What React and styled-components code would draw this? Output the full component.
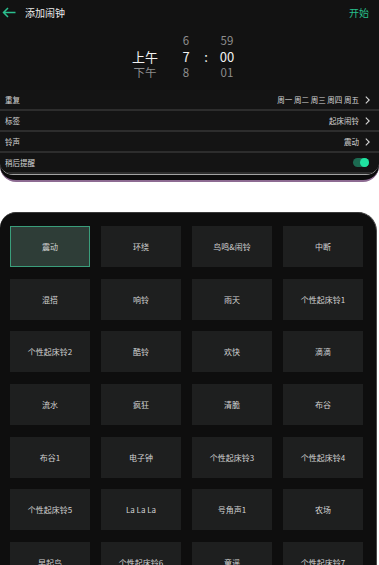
import React from "react";
import styled, { createGlobalStyle } from "styled-components";

const Global = createGlobalStyle`
  html, body { margin: 0; padding: 0; background: #ffffff; }
  body { font-family: "Noto Sans CJK SC", "Noto Sans", sans-serif; width: 379px; overflow: hidden; }
  * { box-sizing: border-box; }
`;

const Page = styled.div`
  width: 379px;
  height: 565px;
  overflow: hidden;
  display: flex;
  flex-direction: column;
  gap: 30px;
  background: #fff;
`;

const TopPhone = styled.div`
  background: #0b0b0b;
  border-radius: 0 0 16px 16px;
  border-bottom: 2px solid #8d6b92;
  padding-bottom: 5px;
`;

const Screen = styled.div`
  background: #121212;
  border-radius: 0 0 13px 13px;
  border-bottom: 1px solid #a3a3a3;
  overflow: hidden;
`;

const Header = styled.div`
  height: 24px;
  display: flex;
  align-items: center;
  padding: 0 10px 0 2px;
`;

const Title = styled.div`
  margin-left: 9px;
  font-size: 10px;
  color: #ececec;
  flex: 1;
`;

const Start = styled.div`
  font-size: 10px;
  color: #27c08c;
`;

const Picker = styled.div`
  height: 66px;
  display: flex;
  padding-top: 9px;
`;

const Wheel = styled.div`
  width: ${(p) => p.$w}px;
  margin-left: ${(p) => p.$ml || 0}px;
  display: flex;
  flex-direction: column;
  align-items: center;
  gap: 1px;
`;

const WheelItem = styled.div`
  height: 15px;
  line-height: 15px;
  font-size: ${(p) => (p.$active ? 13 : 11.5)}px;
  color: ${(p) => (p.$active ? "#f2f2f2" : "#8e8e8e")};
  white-space: nowrap;
`;

const Row = styled.div`
  height: 21px;
  display: flex;
  align-items: center;
  padding: 0 9px 0 5px;
  background: #141414;
  border-bottom: 2px solid #2d2d2d;
`;

const Label = styled.div`
  flex: 1;
  font-size: 7.5px;
  color: #d6d6d6;
`;

const Value = styled.div`
  font-size: 7.5px;
  color: #d6d6d6;
  display: flex;
  align-items: center;
  gap: 6px;
`;

const Toggle = styled.div`
  width: 16px;
  height: 9px;
  border-radius: 5px;
  background: #1c6a51;
  display: flex;
  justify-content: flex-end;
  margin-right: 1px;
`;

const Knob = styled.div`
  width: 9px;
  height: 9px;
  border-radius: 50%;
  background: #1fe3a0;
`;

const BottomPhone = styled.div`
  flex: 1;
  width: 377px;
  background: #0e0e0e;
  border-radius: 16px 19px 0 0;
  border-top: 1px solid #3a3a3a;
  border-right: 1px solid #4a4a4a;
  padding: 13px 0 0 10px;
`;

const Grid = styled.div`
  display: grid;
  grid-template-columns: repeat(4, 80px);
  grid-auto-rows: 41px;
  column-gap: 11px;
  row-gap: 11.7px;
`;

const Cell = styled.div`
  display: flex;
  align-items: center;
  justify-content: center;
  font-size: 8px;
  color: #d2d2d2;
  background: ${(p) => (p.$selected ? "#2e3d37" : "#1e1f1f")};
  border: 1px solid ${(p) => (p.$selected ? "#3a9e7b" : "transparent")};
  white-space: nowrap;
`;

const Chevron = () => (
  <svg width="5" height="8" viewBox="0 0 5 8">
    <path d="M0.8 0.6 L4.2 4 L0.8 7.4" fill="none" stroke="#d8d8d8" strokeWidth="1.1" />
  </svg>
);

const BackArrow = () => (
  <svg width="14" height="11" viewBox="0 0 14 11">
    <path d="M13.5 5.5 H1.5 M6 1 L1.5 5.5 L6 10" fill="none" stroke="#2bbf8e" strokeWidth="1.5" />
  </svg>
);

const tones = [
  "震动", "环绕", "鸟鸣&闹铃", "中断",
  "混搭", "响铃", "雨天", "个性起床铃1",
  "个性起床铃2", "酷铃", "欢快", "滴滴",
  "流水", "疯狂", "清脆", "布谷",
  "布谷1", "电子钟", "个性起床铃3", "个性起床铃4",
  "个性起床铃5", "La La La", "号角声1", "农场",
  "早起鸟", "个性起床铃6", "童谣", "个性起床铃7",
];

export default function App() {
  return (
    <>
      <Global />
      <Page>
        <TopPhone>
          <Screen>
            <Header>
              <BackArrow />
              <Title>添加闹钟</Title>
              <Start>开始</Start>
            </Header>
            <Picker>
              <Wheel $w={24} $ml={133}>
                <WheelItem>&nbsp;</WheelItem>
                <WheelItem $active>上午</WheelItem>
                <WheelItem>下午</WheelItem>
              </Wheel>
              <Wheel $w={36} $ml={11}>
                <WheelItem>6</WheelItem>
                <WheelItem $active>7</WheelItem>
                <WheelItem>8</WheelItem>
              </Wheel>
              <Wheel $w={4}>
                <WheelItem>&nbsp;</WheelItem>
                <WheelItem $active>:</WheelItem>
                <WheelItem>&nbsp;</WheelItem>
              </Wheel>
              <Wheel $w={38}>
                <WheelItem>59</WheelItem>
                <WheelItem $active>00</WheelItem>
                <WheelItem>01</WheelItem>
              </Wheel>
            </Picker>
            <Row>
              <Label>重复</Label>
              <Value>周一 周二 周三 周四 周五<Chevron /></Value>
            </Row>
            <Row>
              <Label>标签</Label>
              <Value>起床闹铃<Chevron /></Value>
            </Row>
            <Row>
              <Label>铃声</Label>
              <Value>震动<Chevron /></Value>
            </Row>
            <Row>
              <Label>稍后提醒</Label>
              <Toggle><Knob /></Toggle>
            </Row>
          </Screen>
        </TopPhone>
        <BottomPhone>
          <Grid>
            {tones.map((t, i) => (
              <Cell key={i} $selected={i === 0}>{t}</Cell>
            ))}
          </Grid>
        </BottomPhone>
      </Page>
    </>
  );
}
